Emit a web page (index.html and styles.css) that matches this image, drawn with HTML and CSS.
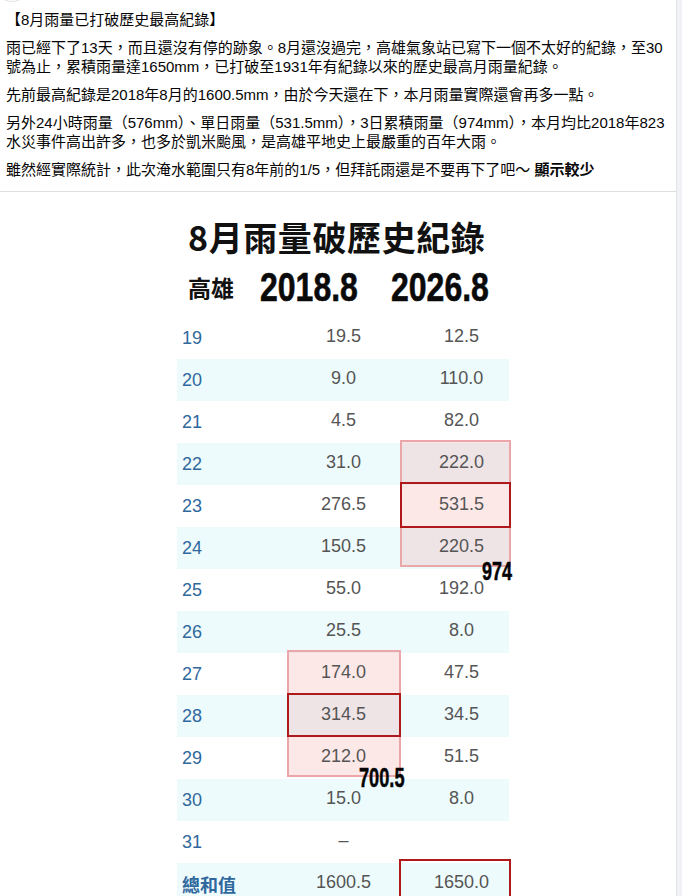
FILE: index.html
```html
<!DOCTYPE html>
<html lang="zh-Hant">
<head>
<meta charset="utf-8">
<title>8月雨量已打破歷史最高紀錄</title>
<link rel="stylesheet" href="styles.css">
</head>
<body>
<div class="page">
  <main class="post">
    <div class="avatar-peek"><span class="avatar"></span></div>
    <div class="message">
      <p>【8月雨量已打破歷史最高紀錄】</p>
      <p>雨已經下了13天，而且還沒有停的跡象。8月還沒過完，高雄氣象站已寫下一個不太好的紀錄，至30號為止，累積雨量達1650mm，已打破至1931年有紀錄以來的歷史最高月雨量紀錄。</p>
      <p>先前最高紀錄是2018年8月的1600.5mm，由於今天還在下，本月雨量實際還會再多一點。</p>
      <p>另外24小時雨量（576mm）、單日雨量（531.5mm），3日累積雨量（974mm），本月均比2018年823水災事件高出許多，也多於凱米颱風，是高雄平地史上最嚴重的百年大雨。</p>
      <p>雖然經實際統計，此次淹水範圍只有8年前的1/5，但拜託雨還是不要再下了吧〜 <b class="more">顯示較少</b></p>
    </div>
    <div class="media">
      <div class="chart">
        <div class="chart-title">8月雨量破歷史紀錄</div>
        <div class="chart-sub">
          <span class="city">高雄</span>
          <span class="year"><span class="squeeze">2018.8</span></span>
          <span class="year"><span class="squeeze">2026.8</span></span>
        </div>
        <div class="table">
          <div class="row"><span class="day">19</span><span class="v2">19.5</span><span class="v3">12.5</span></div>
          <div class="row alt"><span class="day">20</span><span class="v2">9.0</span><span class="v3">110.0</span></div>
          <div class="row"><span class="day">21</span><span class="v2">4.5</span><span class="v3">82.0</span></div>
          <div class="row alt"><span class="day">22</span><span class="v2">31.0</span><span class="v3">222.0</span></div>
          <div class="row"><span class="day">23</span><span class="v2">276.5</span><span class="v3">531.5</span></div>
          <div class="row alt"><span class="day">24</span><span class="v2">150.5</span><span class="v3">220.5</span></div>
          <div class="row"><span class="day">25</span><span class="v2">55.0</span><span class="v3">192.0</span></div>
          <div class="row alt"><span class="day">26</span><span class="v2">25.5</span><span class="v3">8.0</span></div>
          <div class="row"><span class="day">27</span><span class="v2">174.0</span><span class="v3">47.5</span></div>
          <div class="row alt"><span class="day">28</span><span class="v2">314.5</span><span class="v3">34.5</span></div>
          <div class="row"><span class="day">29</span><span class="v2">212.0</span><span class="v3">51.5</span></div>
          <div class="row alt"><span class="day">30</span><span class="v2">15.0</span><span class="v3">8.0</span></div>
          <div class="row"><span class="day">31</span><span class="v2">–</span><span class="v3"></span></div>
          <div class="row alt total"><span class="day">總和值</span><span class="v2">1600.5</span><span class="v3">1650.0</span></div>

          <div class="mark soft mark-a"></div>
          <div class="mark strong mark-a2"></div>
          <div class="mark soft mark-b"></div>
          <div class="mark strong mark-b2"></div>
          <div class="mark strong mark-c"></div>
          <span class="note note-974">974</span>
          <span class="note note-700">700.5</span>
        </div>
      </div>
    </div>
  </main>
  <aside class="rail"></aside>
</div>
</body>
</html>
```

FILE: styles.css
```css
* { box-sizing: border-box; }

html, body {
  margin: 0;
  padding: 0;
  background: #ffffff;
}

.page {
  display: flex;
  height: 100vh;
  overflow: hidden;
}

.post {
  flex: 1;
  min-width: 0;
  background: #ffffff;
}

.rail {
  width: 6px;
  flex: none;
  background: #f0f2f5;
  border-left: 1px solid #e1e3e7;
}

/* bottom of the avatar from the header above */
.avatar-peek {
  height: 3px;
  overflow: hidden;
}
.avatar {
  display: block;
  width: 36px;
  height: 36px;
  margin: -34px 0 0 -6px;
  border-radius: 50%;
  border: 1px solid #e2e2e2;
  background: #ffffff;
}

.message {
  padding: 7px 10px 12px 6px;
  border-bottom: 1px solid #dcdee2;
  font-family: "Liberation Sans", "Noto Sans CJK TC", sans-serif;
  font-size: 15px;
  line-height: 19px;
  color: #050505;
}
.message p {
  margin: 0;
}
.message p + p {
  margin-top: 9px;
}
.more {
  font-weight: 700;
}

/* ---------- image ---------- */
.media {
  background: #ffffff;
}

.chart {
  width: 334px;
  margin-left: 177px;
}

.chart-title {
  margin-top: 25px;
  padding-left: 11px;
  height: 40px;
  font-family: "Noto Sans CJK TC", sans-serif;
  font-weight: 700;
  font-size: 34px;
  line-height: 40px;
  letter-spacing: 0.6px;
  color: #111111;
  white-space: nowrap;
}

.chart-sub {
  margin-top: 15px;
  padding-left: 11px;
  height: 30px;
  display: grid;
  grid-template-columns: 72px 131px 1fr;
  line-height: 30px;
  white-space: nowrap;
}
.city {
  font-family: "Noto Sans CJK TC", sans-serif;
  font-weight: 700;
  font-size: 23px;
  color: #111111;
}
.year {
  font-family: "Liberation Sans", sans-serif;
  font-weight: 700;
  font-size: 40px;
  color: #0a0a0a;
}
.squeeze {
  display: inline-block;
  transform: scaleX(0.8);
  transform-origin: left center;
  -webkit-text-stroke: 0.6px #0a0a0a;
}

.table {
  position: relative;
  margin-top: 15px;
  width: 334px;
}

.row {
  display: grid;
  grid-template-columns: 110px 113px 111px;
  height: 42px;
  line-height: 42px;
  font-family: "Liberation Sans", sans-serif;
  font-size: 18px;
  white-space: nowrap;
}
.row.alt {
  background: linear-gradient(to right, #eefbfc 0, #eefbfc 332px, transparent 332px);
}
.day,
.v2,
.v3 {
  position: relative;
  z-index: 1;
}
.day {
  padding-left: 5px;
  color: #2f689c;
}
.v2, .v3 {
  text-align: center;
  color: #555555;
}
.v2 {
  margin-top: -2px;
}
.v3 {
  padding-left: 12px;
  margin-top: -2px;
}
.total .day {
  font-family: "Noto Sans CJK TC", sans-serif;
  font-weight: 700;
  font-size: 18px;
}

/* highlight boxes drawn over the table */
.mark {
  position: absolute;
  z-index: 0;
}
.mark.soft {
  background: rgba(244, 140, 140, 0.2);
  border: 2px solid #eaa6a8;
}
.mark.strong {
  border: 2px solid #b0191c;
  z-index: 2;
}
.mark-a  { left: 223px; top: 123px; width: 111px; height: 127px; }
.mark-a2 { left: 223px; top: 165px; width: 111px; height: 46px; }
.mark-b  { left: 110px; top: 333px; width: 114px; height: 127px; }
.mark-b2 { left: 110px; top: 376px; width: 114px; height: 44px; }
.mark-c  { left: 222px; top: 542px; width: 112px; height: 70px; }

.note {
  position: absolute;
  z-index: 3;
  font-family: "Liberation Sans", sans-serif;
  font-weight: 700;
  color: #050505;
  transform-origin: left top;
  -webkit-text-stroke: 0.5px #050505;
  white-space: nowrap;
}
.note-974 {
  left: 305px;
  top: 242px;
  font-size: 25px;
  line-height: 25px;
  transform: scaleX(0.72);
}
.note-700 {
  left: 182px;
  top: 447px;
  font-size: 28px;
  line-height: 28px;
  transform: scaleX(0.65);
}
```
